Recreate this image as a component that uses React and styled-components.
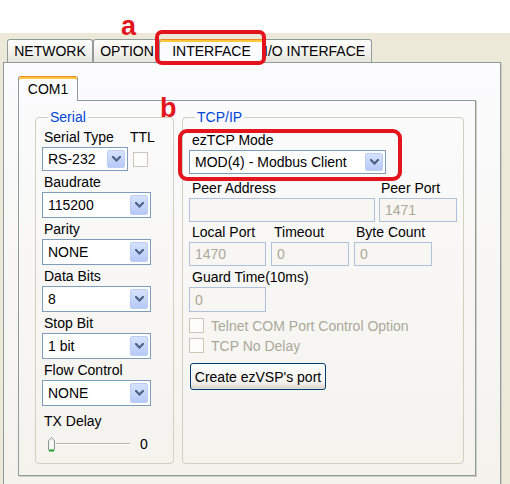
import React from "react";
import styled, { createGlobalStyle, css } from "styled-components";

const GlobalStyle = createGlobalStyle`
  html, body {
    margin: 0;
    padding: 0;
    background: #fff;
  }
  body {
    font-family: "Liberation Sans", Arial, sans-serif;
    font-size: 14px;
    color: #000;
  }
`;

const Screen = styled.div`
  position: relative;
  width: 510px;
  height: 484px;
  overflow: hidden;
  background: #fff;
  display: flex;
  flex-direction: column;
`;

const Window = styled.div`
  margin-top: 33px;
  flex: 1;
  background: #ece9d8;
  padding: 3px 9px 0 3px;
  display: flex;
  flex-direction: column;
`;

const TabStrip = styled.div`
  display: flex;
  align-items: flex-end;
  height: ${(p) => p.$h}px;
  padding-left: ${(p) => p.$pl || 0}px;
`;

const Tab = styled.div`
  position: relative;
  box-sizing: border-box;
  width: ${(p) => p.$w}px;
  height: ${(p) => (p.$active ? p.$h + 1 : p.$h)}px;
  z-index: ${(p) => (p.$active ? 2 : 1)};
  display: flex;
  align-items: center;
  justify-content: ${(p) => (p.$start ? "flex-start" : "center")};
  padding-left: ${(p) => (p.$start ? 1 : 0)}px;
  white-space: nowrap;
  border: 1px solid #919b9c;
  border-bottom: none;
  border-radius: 3px 3px 0 0;
  background: linear-gradient(#ffffff, #f2f1ec 55%, #e6e5de);
  ${(p) =>
    p.$active &&
    css`
      margin: 0 ${p.$raise ? -2 : 0}px -1px;
      padding-bottom: ${p.$raise ? 2 : 0}px;
      background: #fcfcfe;
      border-top-color: #e68b2c;
      box-shadow: inset 0 2px 0 #ffc73c;
    `}
`;

const Page = styled.div`
  box-sizing: border-box;
  height: ${(p) => p.$h}px;
  border: 1px solid #919b9c;
  box-shadow: 1px 1px 0 #d2cfc2;
  background: ${(p) => (p.$outer ? "linear-gradient(#fcfcfe, #f3f2ec)" : "transparent")};
  padding: ${(p) => p.$pad};
  display: flex;
  flex-direction: ${(p) => (p.$outer ? "column" : "row")};
  gap: ${(p) => (p.$outer ? 0 : 8)}px;
`;

const Group = styled.fieldset`
  box-sizing: border-box;
  margin: 0;
  min-width: 0;
  width: ${(p) => (p.$w ? `${p.$w}px` : "auto")};
  flex: ${(p) => (p.$w ? "none" : 1)};
  border: 1px solid #d0d0bf;
  border-radius: 4px;
  padding: 2px 6px 0 6px;
  display: flex;
  flex-direction: column;
`;

const Legend = styled.legend`
  margin-left: 6px;
  padding: 0 2px;
  color: #0046d5;
  line-height: 16px;
`;

const Label = styled.div`
  height: 20px;
  line-height: 20px;
  padding-left: ${(p) => (p.$pl === undefined ? 2 : p.$pl)}px;
  margin-top: ${(p) => p.$mt || 0}px;
  white-space: nowrap;
`;

const TypeGrid = styled.div`
  display: grid;
  grid-template-columns: 86px auto;
  column-gap: 2px;
  align-items: center;
  margin-bottom: 1px;
`;

const Fields = styled.div`
  display: flex;
  flex-direction: column;
  gap: 1px;
`;

const Combo = styled.div`
  box-sizing: border-box;
  width: ${(p) => p.$w}px;
  height: ${(p) => p.$h || 26}px;
  border: 1px solid #7f9db9;
  background: #fff;
  display: flex;
  align-items: center;
  padding: 0 2px 0 5px;
`;

const ComboText = styled.span`
  flex: 1;
  white-space: nowrap;
  overflow: hidden;
`;

const DropButton = styled.span`
  box-sizing: border-box;
  width: 18px;
  align-self: stretch;
  margin: 2px 0;
  border: 1px solid #bccdf5;
  border-radius: 2px;
  background: linear-gradient(#d6e2fd, #b6caf8);
  display: flex;
  align-items: center;
  justify-content: center;
`;

const Check = styled.span`
  box-sizing: border-box;
  display: block;
  width: 15px;
  height: 15px;
  margin-left: ${(p) => p.$ml || 0}px;
  border: 1px solid #c9c7ba;
  background: #fdfdfc;
`;

const SliderRow = styled.div`
  display: flex;
  align-items: center;
  height: 20px;
  margin-top: 3px;
  padding-left: 5px;
`;

const Track = styled.div`
  width: 74px;
  height: 1px;
  background: #b8b6aa;
  border-bottom: 1px solid #fff;
`;

const SliderValue = styled.span`
  margin-left: 10px;
`;

const FieldGrid = styled.div`
  display: grid;
  grid-template-columns: ${(p) => p.$cols};
  grid-template-rows: 20px ${(p) => p.$h || 24}px;
  column-gap: ${(p) => p.$gap || 4}px;
  margin-top: ${(p) => p.$mt || 0}px;
`;

const TextField = styled.div`
  box-sizing: border-box;
  border: 1px solid #afc0da;
  background: #f7f6f2;
  color: #aca899;
  padding-left: 5px;
  display: flex;
  align-items: center;
  white-space: nowrap;
`;

const CheckRow = styled.div`
  display: flex;
  align-items: center;
  gap: 7px;
  height: 17px;
  margin-top: ${(p) => p.$mt}px;
  color: #aca899;
  white-space: nowrap;
`;

const PushButton = styled.button`
  align-self: flex-start;
  font: inherit;
  color: #000;
  width: 136px;
  height: 27px;
  margin: 9px 0 0 1px;
  padding: 0;
  border: 1px solid #003c74;
  border-radius: 3px;
  background: linear-gradient(#ffffff, #f2f1ec 75%, #d8d2c6);
  box-shadow: inset 0 -1px 0 #e3e0d5;
  white-space: nowrap;
`;

const RedFrame = styled.div`
  position: absolute;
  box-sizing: border-box;
  left: ${(p) => p.$x}px;
  top: ${(p) => p.$y}px;
  width: ${(p) => p.$w}px;
  height: ${(p) => p.$h}px;
  border: 4px solid #e3141b;
  border-radius: ${(p) => p.$r}px;
  z-index: 5;
`;

const Mark = styled.span`
  position: absolute;
  left: ${(p) => p.$x}px;
  top: ${(p) => p.$y}px;
  font-family: "Liberation Sans", Arial, sans-serif;
  font-weight: bold;
  font-size: 27px;
  line-height: 27px;
  color: #e3141b;
  z-index: 5;
`;

const Chevron = () => (
  <svg width="9" height="6" viewBox="0 0 9 6">
    <polyline
      points="1,1 4.5,4.5 8,1"
      fill="none"
      stroke="#4d6185"
      strokeWidth="2.2"
      strokeLinecap="square"
    />
  </svg>
);

const Thumb = () => (
  <svg width="9" height="16" viewBox="0 0 9 16">
    <path
      d="M1.5 5 L4.5 1.5 L7.5 5 L7.5 13.5 Q7.5 14.5 6.5 14.5 L2.5 14.5 Q1.5 14.5 1.5 13.5 Z"
      fill="#f7f7f4"
      stroke="#8a9499"
    />
    <path d="M2 14.5 L7 14.5" stroke="#21a121" strokeWidth="2" />
  </svg>
);

const Select = ({ value, w, h }) => (
  <Combo $w={w} $h={h}>
    <ComboText>{value}</ComboText>
    <DropButton>
      <Chevron />
    </DropButton>
  </Combo>
);

const serialFields = [
  { label: "Baudrate", value: "115200" },
  { label: "Parity", value: "NONE" },
  { label: "Data Bits", value: "8" },
  { label: "Stop Bit", value: "1 bit" },
  { label: "Flow Control", value: "NONE" },
];

const mainTabs = [
  { name: "NETWORK", w: 86 },
  { name: "OPTION", w: 68 },
  { name: "INTERFACE", w: 105, active: true },
  { name: "I/O INTERFACE", w: 110, start: true },
];

const App = () => (
  <Screen>
    <GlobalStyle />
    <Window>
      <TabStrip $h={26} $pl={4}>
        {mainTabs.map((t) => (
          <Tab key={t.name} $w={t.w} $h={23} $active={t.active} $start={t.start} $raise>
            {t.name}
          </Tab>
        ))}
      </TabStrip>
      <Page $outer $h={440} $pad="13px 24px 0 14px">
        <TabStrip $h={24}>
          <Tab $w={60} $h={24} $active>
            COM1
          </Tab>
        </TabStrip>
        <Page $h={376} $pad="8px 11px 11px 16px">
          <Group $w={139}>
            <Legend>Serial</Legend>
            <TypeGrid>
              <Label>Serial Type</Label>
              <Label $pl={0}>TTL</Label>
              <Select value="RS-232" w={86} h={24} />
              <Check $ml={3} />
            </TypeGrid>
            <Fields>
              {serialFields.map((f) => (
                <div key={f.label}>
                  <Label>{f.label}</Label>
                  <Select value={f.value} w={109} />
                </div>
              ))}
            </Fields>
            <Label $mt={5}>TX Delay</Label>
            <SliderRow>
              <Thumb />
              <Track />
              <SliderValue>0</SliderValue>
            </SliderRow>
          </Group>

          <Group>
            <Legend>TCP/IP</Legend>
            <Label $mt={3} $pl={3}>ezTCP Mode</Label>
            <Select value="MOD(4) - Modbus Client" w={197} h={24} />
            <FieldGrid $cols="186px 78px" $mt={4}>
              <Label $pl={3}>Peer Address</Label>
              <Label>Peer Port</Label>
              <TextField />
              <TextField>1471</TextField>
            </FieldGrid>
            <FieldGrid $cols="77px 78px 78px" $gap={5}>
              <Label $pl={3}>Local Port</Label>
              <Label $pl={3}>Timeout</Label>
              <Label $pl={2}>Byte Count</Label>
              <TextField>1470</TextField>
              <TextField>0</TextField>
              <TextField>0</TextField>
            </FieldGrid>
            <FieldGrid $cols="77px" $h={25} $mt={1}>
              <Label $pl={3}>Guard Time(10ms)</Label>
              <TextField>0</TextField>
            </FieldGrid>
            <CheckRow $mt={5}>
              <Check />
              Telnet COM Port Control Option
            </CheckRow>
            <CheckRow $mt={3}>
              <Check />
              TCP No Delay
            </CheckRow>
            <PushButton>Create ezVSP's port</PushButton>
          </Group>
        </Page>
      </Page>
    </Window>

    <RedFrame $x={155} $y={30} $w={111} $h={35} $r={7} />
    <Mark $x={121} $y={13}>a</Mark>
    <RedFrame $x={178} $y={129} $w={224} $h={52} $r={9} />
    <Mark $x={160} $y={95}>b</Mark>
  </Screen>
);

export default App;
